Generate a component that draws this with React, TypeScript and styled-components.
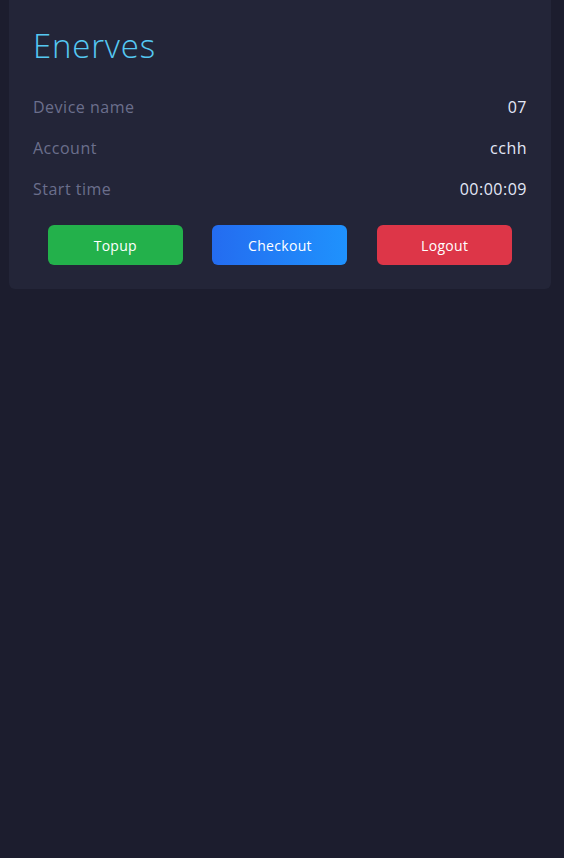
import React from "react";
import styled, { createGlobalStyle } from "styled-components";

const GlobalStyle = createGlobalStyle`
  html, body {
    margin: 0;
    padding: 0;
    background: #1c1d2e;
    font-family: "Open Sans", "Noto Sans", sans-serif;
  }
`;

const Page = styled.div`
  min-height: 858px;
  padding: 0 13px 0 9px;
  box-sizing: border-box;
`;

const Card = styled.div`
  background: #232538;
  border-radius: 0 0 6px 6px;
  padding: 24px 24px 24px;
`;

const Title = styled.h1`
  margin: 0 0 18px;
  font-size: 33px;
  font-weight: 300;
  line-height: 44px;
  letter-spacing: 0.8px;
  color: #55c8f2;
`;

const Row = styled.div`
  display: flex;
  justify-content: space-between;
  align-items: center;
  height: 41px;
  font-size: 16px;
  letter-spacing: 0.5px;
`;

const Label = styled.span`
  color: #6b6f8c;
  font-weight: 400;
`;

const Value = styled.span`
  color: #e3e8f7;
  font-weight: 500;
`;

const Actions = styled.div`
  display: flex;
  justify-content: space-around;
  margin-top: 16px;
`;

const Button = styled.button<{ $bg: string }>`
  width: 135px;
  height: 40px;
  border: none;
  border-radius: 6px;
  background: ${(p) => p.$bg};
  color: #ffffff;
  font-family: inherit;
  font-size: 14px;
  font-weight: 500;
  letter-spacing: 0.3px;
  cursor: pointer;
`;

const rows = [
  { label: "Device name", value: "07" },
  { label: "Account", value: "cchh" },
  { label: "Start time", value: "00:00:09" },
];

export default function App() {
  return (
    <>
      <GlobalStyle />
      <Page>
        <Card>
          <Title>Enerves</Title>
          {rows.map((r) => (
            <Row key={r.label}>
              <Label>{r.label}</Label>
              <Value>{r.value}</Value>
            </Row>
          ))}
          <Actions>
            <Button $bg="#23b14b">Topup</Button>
            <Button $bg="linear-gradient(90deg, #246cf0, #1f92fd)">Checkout</Button>
            <Button $bg="#dd3648">Logout</Button>
          </Actions>
        </Card>
      </Page>
    </>
  );
}
